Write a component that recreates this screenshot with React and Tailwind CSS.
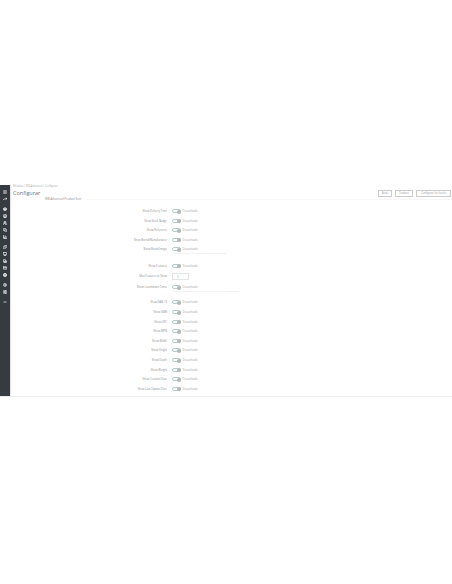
import React from "react";
import { Menu, TrendingUp, ShoppingBasket, Store, Users, MessagesSquare, BarChart3, Puzzle, Monitor, Truck, CreditCard, Globe, Settings, SlidersHorizontal, Minus } from "lucide-react";

const Side = ({ I, mt = "mt-[3px]" }) => (
  <div className={`${mt} flex h-1 w-full justify-center text-[#d8d9db]`}>
    <I className="h-1 w-1" strokeWidth={5} />
  </div>
);

const Toggle = ({ label, help, rowH = "h-[9.6px]" }) => (
  <div className={`flex items-start ${help ? rowH : "h-[9.6px]"}`}>
    <div className="w-[157px] text-right text-[2.7px] leading-[4px] text-[#8c8c8c]">{label}</div>
    <div className="ml-[5px]">
      <div className="flex h-1 items-center">
        <div className="relative h-1 w-[9px] rounded-full border-[0.5px] border-[#b5d0cb] bg-white">
          <div className="absolute right-[-0.5px] top-[-0.5px] h-1 w-1 rounded-full bg-[#b4b6b8]" />
        </div>
        <span className="ml-[1.5px] text-[2.7px] leading-[4px] text-[#a0a0a0]">Desactivado</span>
      </div>
      {help && <div className="mt-[0.8px] h-[3px] text-[2.5px] leading-[3px] whitespace-nowrap text-[#dedede]">{help}</div>}
    </div>
  </div>
);

export default function App() {
  return (
    <div className="min-h-[584px] bg-white pt-[185px] font-['Open_Sans',sans-serif]">
      <div className="flex h-[212px] border-b border-[#ececec]">
        <aside className="w-[10px] shrink-0 bg-[#363a41] pt-[2px] shadow-[1px_0_1px_#e4e4e4]">
          <Side I={Menu} />
          <Side I={TrendingUp} />
          <Side I={ShoppingBasket} mt="mt-[6px]" />
          <Side I={Store} />
          <Side I={Users} />
          <Side I={MessagesSquare} />
          <Side I={BarChart3} />
          <Side I={Puzzle} mt="mt-[6px]" />
          <Side I={Monitor} />
          <Side I={Truck} />
          <Side I={CreditCard} />
          <Side I={Globe} />
          <Side I={Settings} mt="mt-[6px]" />
          <Side I={SlidersHorizontal} />
          <Side I={Minus} mt="mt-[6px]" />
        </aside>
        <main className="min-w-0 flex-1">
          <div className="relative h-[13px] pl-[3px]">
            <div className="text-[2.6px] leading-[3px] text-[#b0b0b0]">Módulos  /  WB Advanced  /  Configurar</div>
            <div className="mt-[1px] text-[5.5px] leading-[8px] text-[#6f7378]">Configurar</div>
            <div className="absolute right-[1px] top-[5px] flex gap-[3px]">
              <button className="h-[7px] w-[14px] border-[0.5px] border-[#cccccc] text-[2.6px] leading-none text-[#999]">Atrás</button>
              <button className="h-[7px] w-[18px] border-[0.5px] border-[#cccccc] text-[2.6px] leading-none text-[#999]">Traducir</button>
              <button className="h-[7px] w-[35px] border-[0.5px] border-[#cccccc] text-[2.6px] leading-none text-[#999]">Configurar los hooks</button>
            </div>
          </div>
          <div className="flex h-[4px] items-start">
            <div className="pl-[35px] text-[2.9px] leading-[3px] text-[#8c8c8c]">WB Advanced Product Sort</div>
            <div className="mt-[1px] ml-[6px] h-[0.5px] flex-1 bg-[#f6f6f6]" />
          </div>
          <div className="pt-[7px]">
            <Toggle label="Show Delivery Time" />
            <Toggle label="Show Stock Badge" />
            <Toggle label="Show Reference" />
            <Toggle label="Show Brand/Manufacturer" />
            <Toggle label="Show Brand Image" help="Mostrar imagen de marca en lugar del nombre" rowH="h-[16.5px]" />
            <Toggle label="Show Features" />
            <div className="flex h-[12px] items-start">
              <div className="w-[157px] pt-[1px] text-right text-[2.7px] leading-[4px] text-[#8c8c8c]">Max Features to Show</div>
              <div className="ml-[5px] flex h-[7px] w-[17px] items-center border-[0.5px] border-[#e4e4e4] pl-[4px] text-[2.7px] text-[#a0a0a0]">3</div>
            </div>
            <Toggle label="Show Countdown Timer" help="Mostrar contador de tiempo para ofertas con fecha límite" rowH="h-[15px]" />
            <Toggle label="Show EAN-13" />
            <Toggle label="Show ISBN" />
            <Toggle label="Show UPC" />
            <Toggle label="Show MPN" />
            <Toggle label="Show Width" />
            <Toggle label="Show Height" />
            <Toggle label="Show Depth" />
            <Toggle label="Show Weight" />
            <Toggle label="Show Creation Date" />
            <Toggle label="Show Last Update Date" />
          </div>
        </main>
      </div>
    </div>
  );
}
